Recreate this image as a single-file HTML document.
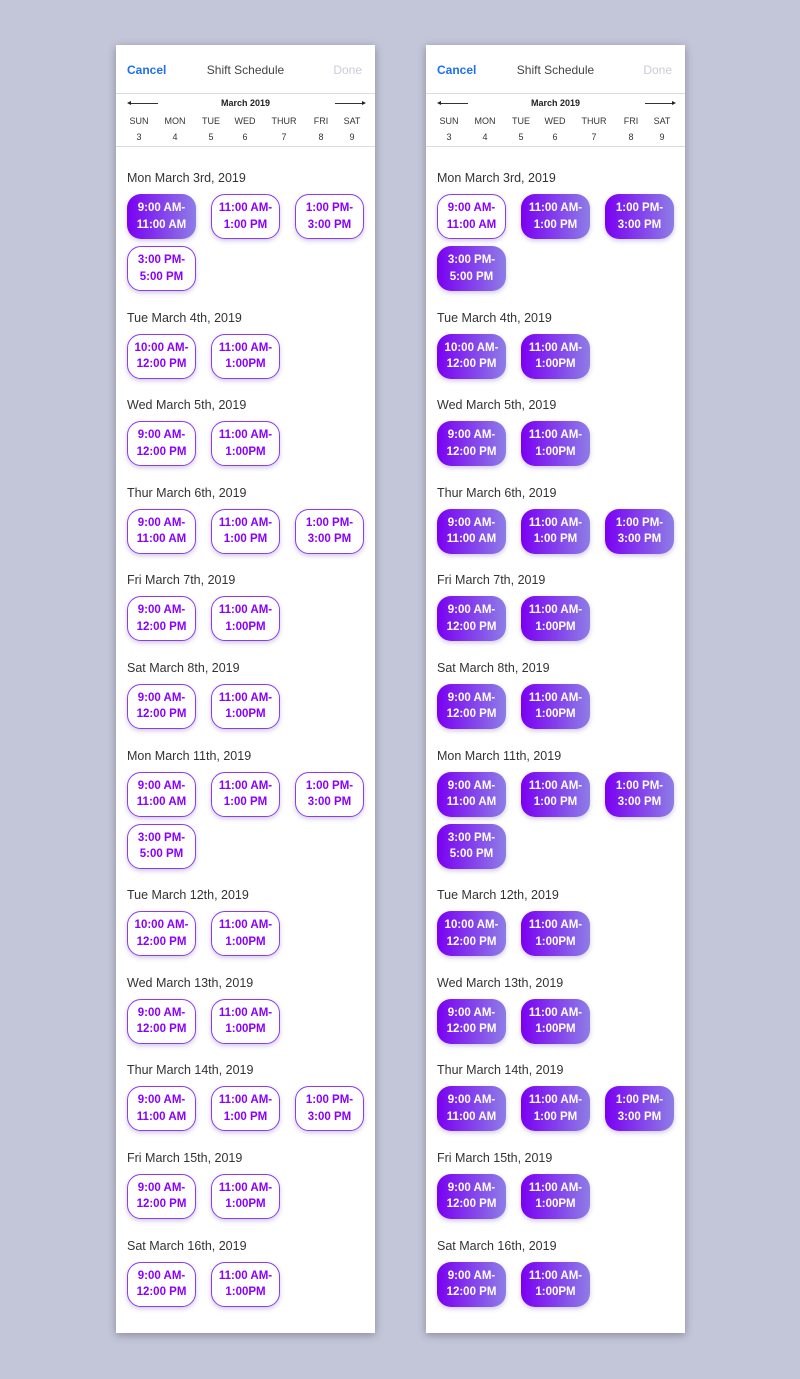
<!DOCTYPE html>
<html><head><meta charset="utf-8"><style>
body{margin:0;width:800px;height:1379px;background:#c3c5d9;font-family:"Liberation Sans",sans-serif;position:relative;overflow:hidden}
.p{position:absolute;top:45px;width:259px;height:1288px;background:#fff;box-shadow:0 2px 8px rgba(0,0,0,.3)}
.hd{position:relative;height:48px;border-bottom:1px solid #dcdce4}
.hd span{position:absolute;top:18px;font-size:12px}
.c{left:11px;color:#1f6ff0;font-weight:bold}
.t{left:0;right:0;text-align:center;color:#444}
.d{right:13px;color:#c9cbd8}
.cal{position:relative;height:52px;border-bottom:1px solid #dcdce4}
.m{position:absolute;top:4px;left:0;right:0;text-align:center;font-size:9px;font-weight:bold;color:#222}
.al,.ar{position:absolute;top:9px;width:29px;border-top:1px solid #333}
.al{left:13px}.ar{right:11px}
.al:before,.ar:after{content:"";position:absolute;top:-3px;border:2.5px solid transparent}
.al:before{left:-2px;border-right:4px solid #222;border-left:0}
.ar:after{right:-2px;border-left:4px solid #222;border-right:0}
.dy{position:absolute;top:19px;font-size:9px;color:#333;text-align:center;width:30px;line-height:16px;margin-left:-15px}
.s{padding:0 11px}
.h{font-size:12.5px;color:#333;line-height:20px;margin-top:16.6px}
.s:first-child .h{margin-top:21px}
.r{display:flex;flex-wrap:wrap;gap:7px 15px;margin-top:6px;margin-left:0}
.b{box-sizing:border-box;width:69px;height:45px;border-radius:14px;font-size:11.5px;font-weight:bold;line-height:16.5px;padding:6px 0 0 0;text-align:center;box-shadow:0 2px 5px rgba(80,40,160,.25)}
.o{border:1.6px solid #8b3cf2;color:#8a00ff;background:#fff;padding-top:5px}
.f{background:linear-gradient(90deg,#7a00f2,#8d7de6);color:#fff}
</style></head><body>

<div class="p" style="left:116px">
<div class="hd"><span class="c">Cancel</span><span class="t">Shift Schedule</span><span class="d">Done</span></div>
<div class="cal"><div class="al"></div><div class="m">March 2019</div><div class="ar"></div>
<div class="dy" style="left:23px">SUN<br>3</div><div class="dy" style="left:59px">MON<br>4</div><div class="dy" style="left:95px">TUE<br>5</div><div class="dy" style="left:129px">WED<br>6</div><div class="dy" style="left:168px">THUR<br>7</div><div class="dy" style="left:205px">FRI<br>8</div><div class="dy" style="left:236px">SAT<br>9</div></div>
<div>
<div class="s"><div class="h">Mon March 3rd, 2019</div><div class="r"><div class="b f">9:00 AM-<br>11:00 AM</div><div class="b o">11:00 AM-<br>1:00 PM</div><div class="b o">1:00 PM-<br>3:00 PM</div><div class="b o">3:00 PM-<br>5:00 PM</div></div></div>
<div class="s"><div class="h">Tue March 4th, 2019</div><div class="r"><div class="b o">10:00 AM-<br>12:00 PM</div><div class="b o">11:00 AM-<br>1:00PM</div></div></div>
<div class="s"><div class="h">Wed March 5th, 2019</div><div class="r"><div class="b o">9:00 AM-<br>12:00 PM</div><div class="b o">11:00 AM-<br>1:00PM</div></div></div>
<div class="s"><div class="h">Thur March 6th, 2019</div><div class="r"><div class="b o">9:00 AM-<br>11:00 AM</div><div class="b o">11:00 AM-<br>1:00 PM</div><div class="b o">1:00 PM-<br>3:00 PM</div></div></div>
<div class="s"><div class="h">Fri March 7th, 2019</div><div class="r"><div class="b o">9:00 AM-<br>12:00 PM</div><div class="b o">11:00 AM-<br>1:00PM</div></div></div>
<div class="s"><div class="h">Sat March 8th, 2019</div><div class="r"><div class="b o">9:00 AM-<br>12:00 PM</div><div class="b o">11:00 AM-<br>1:00PM</div></div></div>
<div class="s"><div class="h">Mon March 11th, 2019</div><div class="r"><div class="b o">9:00 AM-<br>11:00 AM</div><div class="b o">11:00 AM-<br>1:00 PM</div><div class="b o">1:00 PM-<br>3:00 PM</div><div class="b o">3:00 PM-<br>5:00 PM</div></div></div>
<div class="s"><div class="h">Tue March 12th, 2019</div><div class="r"><div class="b o">10:00 AM-<br>12:00 PM</div><div class="b o">11:00 AM-<br>1:00PM</div></div></div>
<div class="s"><div class="h">Wed March 13th, 2019</div><div class="r"><div class="b o">9:00 AM-<br>12:00 PM</div><div class="b o">11:00 AM-<br>1:00PM</div></div></div>
<div class="s"><div class="h">Thur March 14th, 2019</div><div class="r"><div class="b o">9:00 AM-<br>11:00 AM</div><div class="b o">11:00 AM-<br>1:00 PM</div><div class="b o">1:00 PM-<br>3:00 PM</div></div></div>
<div class="s"><div class="h">Fri March 15th, 2019</div><div class="r"><div class="b o">9:00 AM-<br>12:00 PM</div><div class="b o">11:00 AM-<br>1:00PM</div></div></div>
<div class="s"><div class="h">Sat March 16th, 2019</div><div class="r"><div class="b o">9:00 AM-<br>12:00 PM</div><div class="b o">11:00 AM-<br>1:00PM</div></div></div>
</div></div>

<div class="p" style="left:426px">
<div class="hd"><span class="c">Cancel</span><span class="t">Shift Schedule</span><span class="d">Done</span></div>
<div class="cal"><div class="al"></div><div class="m">March 2019</div><div class="ar"></div>
<div class="dy" style="left:23px">SUN<br>3</div><div class="dy" style="left:59px">MON<br>4</div><div class="dy" style="left:95px">TUE<br>5</div><div class="dy" style="left:129px">WED<br>6</div><div class="dy" style="left:168px">THUR<br>7</div><div class="dy" style="left:205px">FRI<br>8</div><div class="dy" style="left:236px">SAT<br>9</div></div>
<div>
<div class="s"><div class="h">Mon March 3rd, 2019</div><div class="r"><div class="b o">9:00 AM-<br>11:00 AM</div><div class="b f">11:00 AM-<br>1:00 PM</div><div class="b f">1:00 PM-<br>3:00 PM</div><div class="b f">3:00 PM-<br>5:00 PM</div></div></div>
<div class="s"><div class="h">Tue March 4th, 2019</div><div class="r"><div class="b f">10:00 AM-<br>12:00 PM</div><div class="b f">11:00 AM-<br>1:00PM</div></div></div>
<div class="s"><div class="h">Wed March 5th, 2019</div><div class="r"><div class="b f">9:00 AM-<br>12:00 PM</div><div class="b f">11:00 AM-<br>1:00PM</div></div></div>
<div class="s"><div class="h">Thur March 6th, 2019</div><div class="r"><div class="b f">9:00 AM-<br>11:00 AM</div><div class="b f">11:00 AM-<br>1:00 PM</div><div class="b f">1:00 PM-<br>3:00 PM</div></div></div>
<div class="s"><div class="h">Fri March 7th, 2019</div><div class="r"><div class="b f">9:00 AM-<br>12:00 PM</div><div class="b f">11:00 AM-<br>1:00PM</div></div></div>
<div class="s"><div class="h">Sat March 8th, 2019</div><div class="r"><div class="b f">9:00 AM-<br>12:00 PM</div><div class="b f">11:00 AM-<br>1:00PM</div></div></div>
<div class="s"><div class="h">Mon March 11th, 2019</div><div class="r"><div class="b f">9:00 AM-<br>11:00 AM</div><div class="b f">11:00 AM-<br>1:00 PM</div><div class="b f">1:00 PM-<br>3:00 PM</div><div class="b f">3:00 PM-<br>5:00 PM</div></div></div>
<div class="s"><div class="h">Tue March 12th, 2019</div><div class="r"><div class="b f">10:00 AM-<br>12:00 PM</div><div class="b f">11:00 AM-<br>1:00PM</div></div></div>
<div class="s"><div class="h">Wed March 13th, 2019</div><div class="r"><div class="b f">9:00 AM-<br>12:00 PM</div><div class="b f">11:00 AM-<br>1:00PM</div></div></div>
<div class="s"><div class="h">Thur March 14th, 2019</div><div class="r"><div class="b f">9:00 AM-<br>11:00 AM</div><div class="b f">11:00 AM-<br>1:00 PM</div><div class="b f">1:00 PM-<br>3:00 PM</div></div></div>
<div class="s"><div class="h">Fri March 15th, 2019</div><div class="r"><div class="b f">9:00 AM-<br>12:00 PM</div><div class="b f">11:00 AM-<br>1:00PM</div></div></div>
<div class="s"><div class="h">Sat March 16th, 2019</div><div class="r"><div class="b f">9:00 AM-<br>12:00 PM</div><div class="b f">11:00 AM-<br>1:00PM</div></div></div>
</div></div>
</body></html>
